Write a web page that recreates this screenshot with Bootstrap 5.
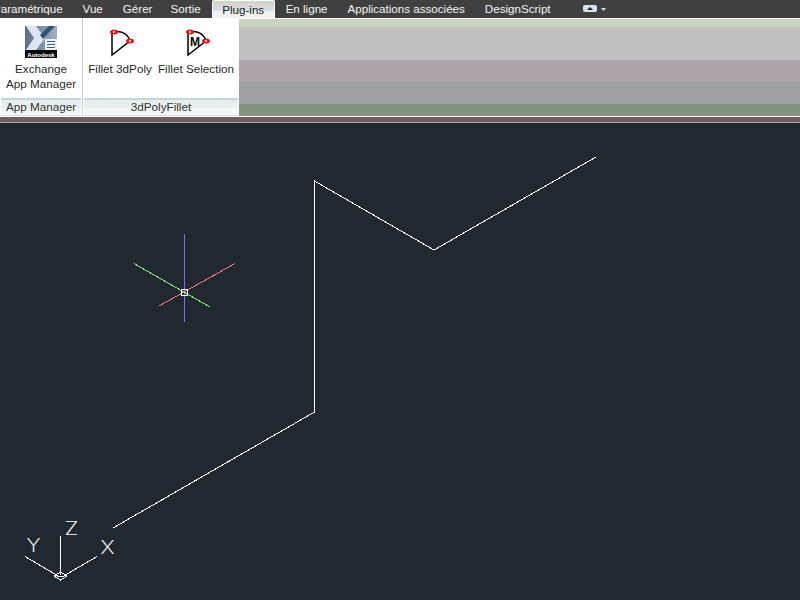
<!DOCTYPE html>
<html lang="fr">
<head>
<meta charset="utf-8">
<link href="https://cdn.jsdelivr.net/npm/bootstrap@5.3.0/dist/css/bootstrap.min.css" rel="stylesheet">
<style>
html,body{height:600px;overflow:hidden;background:#212830;}
body{font-family:"Liberation Sans",Arial,sans-serif;font-size:11.7px;line-height:16px;color:#2a2a2a;}
.tabbar{height:18px;background:#404040;color:#f4f4f4;overflow:hidden;white-space:nowrap;font-size:11.6px;}
.tabitem{padding:0 10px;height:18px;line-height:17px;flex:none;}
.tabitem.firsttab{margin-left:-17px;}
.tabitem.tighttab{padding-left:8px;}
.tabitem.active-tab{color:#222;border:1px solid #fff;border-bottom:0;border-radius:2px 2px 0 0;padding:0 9.5px;margin:0 1px;background:linear-gradient(#cfd8c4 0,#cfd8c4 3px,#dfd3d3 3px,#dfd3d3 6px,#cfe0e6 6px,#cfe0e6 10px,#f2f2f2 10px);}
.ribbon{height:98px;}
.panel-a{width:83px;background:#fff;border-right:1px solid #c8cfc8;}
.panel-b{width:156px;background:#fff;}
.panel-body{height:80px;}
.paneltitle{height:18px;margin:0 1px;border-top:2px solid #c3d4e3;border-bottom:1px solid #d5dfe6;background:linear-gradient(#e8eeee 0,#e8eeee 8px,#f5f6f6 8px);text-align:center;line-height:13px;color:#333;white-space:nowrap;}
.tool{text-align:center;line-height:15px;white-space:nowrap;}
.toolicon{margin-bottom:3px;}
.toolcell-a{width:74px;}
.toolcell-b{width:78px;}
.bands{flex:1;}
.band1{height:1px;background:#fff;}
.band2{height:8px;background:#c8d5bc;}
.band3{height:33px;background:#c0c0c0;}
.band4{height:22px;background:#aba4ab;}
.band5{height:22px;background:#9f9fa3;}
.band6{height:12px;background:#82937f;}
.rule1{height:1px;background:#fff;}
.rule2{height:5px;background:#755a60;}
.rule3{height:1px;background:#a8a8a8;}
.canvasarea{height:477px;position:relative;background:#212830;}
.canvasarea svg{display:block;}
.axis{font-family:"Inter","Lato",sans-serif;font-weight:200;font-size:18px;fill:#fff;stroke:#fff;stroke-width:.15;}
.autotext{font-family:"Liberation Sans",sans-serif;font-size:6px;font-weight:700;fill:#fff;}
.mletter{font-family:"Liberation Sans",sans-serif;font-size:12px;font-weight:700;fill:#000;}
</style>
</head>
<body>
<nav class="tabbar d-flex">
  <span class="tabitem firsttab">Paramétrique</span>
  <span class="tabitem">Vue</span>
  <span class="tabitem">Gérer</span>
  <span class="tabitem tighttab">Sortie</span>
  <span class="tabitem active-tab">Plug-ins</span>
  <span class="tabitem">En ligne</span>
  <span class="tabitem">Applications associées</span>
  <span class="tabitem">DesignScript</span>
  <svg class="ms-3" width="36" height="18" viewBox="0 0 36 18">
    <rect x="6" y="5" width="14" height="7" rx="2" fill="#d8e2ee"/>
    <path d="M10 10h6l-3-3z" fill="#222"/>
    <path d="M24 8h5l-2.500 3z" fill="#ddd"/>
  </svg>
</nav>
<div class="ribbon d-flex">
  <section class="panel-a d-flex flex-column">
    <div class="panel-body tool d-flex flex-column align-items-center">
      <svg class="mt-2 toolicon" width="32" height="32" viewBox="0 0 32 32">
        <defs><linearGradient id="bg" x1="0" y1="0" x2="1" y2="0"><stop offset="0" stop-color="#5a6f88"/><stop offset="1" stop-color="#9fb0c4"/></linearGradient></defs>
        <rect width="32" height="32" fill="url(#bg)"/>
        <path d="M1 0h10l9 12-9 12H1l8-12z" fill="#dbe6f2"/>
        <path d="M24 0h6L18 13l-3-4z" fill="#2f5378"/>
        <rect x="20" y="13" width="12" height="11" fill="#eef2f6"/>
        <path d="M22 15.500h8M22 18.500h8M22 21.500h8" stroke="#36618f"/>
        <rect y="24" width="32" height="8" fill="#0a0a0a"/>
        <text class="autotext" x="16" y="30.500" text-anchor="middle">Autodesk</text>
      </svg>
      <span>Exchange<br>App Manager</span>
    </div>
    <div class="paneltitle">App Manager</div>
  </section>
  <section class="panel-b d-flex flex-column">
    <div class="panel-body d-flex tool">
      <div class="toolcell-a d-flex flex-column align-items-center">
        <svg class="mt-2 toolicon" width="32" height="32" viewBox="0 0 32 32">
          <path d="M10 6A13 13 0 0 1 26 15L8 29V6z" fill="#fff" stroke="#000" stroke-width="1.500"/>
          <ellipse cx="10" cy="6" rx="4" ry="2.500" fill="#e8141c"/><circle cx="10" cy="6" r="1" fill="#fff"/>
          <ellipse cx="26" cy="15" rx="4" ry="2.500" fill="#e8141c"/><circle cx="26" cy="15" r="1" fill="#fff"/>
        </svg>
        <span>Fillet 3dPoly</span>
      </div>
      <div class="toolcell-b d-flex flex-column align-items-center">
        <svg class="mt-2 toolicon" width="32" height="32" viewBox="0 0 32 32">
          <path d="M10 6A13 13 0 0 1 26 15L8 29V6z" fill="#fff" stroke="#000" stroke-width="1.500"/>
          <text class="mletter" x="10" y="19.500">M</text>
          <ellipse cx="10" cy="6" rx="4" ry="2.500" fill="#e8141c"/><circle cx="10" cy="6" r="1" fill="#fff"/>
          <ellipse cx="26" cy="15" rx="4" ry="2.500" fill="#e8141c"/><circle cx="26" cy="15" r="1" fill="#fff"/>
        </svg>
        <span>Fillet Selection</span>
      </div>
    </div>
    <div class="paneltitle">3dPolyFillet</div>
  </section>
  <div class="bands d-flex flex-column">
    <div class="band1"></div><div class="band2"></div><div class="band3"></div><div class="band4"></div><div class="band5"></div><div class="band6"></div>
  </div>
</div>
<div class="rule1"></div><div class="rule2"></div><div class="rule3"></div>
<main class="canvasarea">
  <svg width="800" height="477" viewBox="0 123 800 477" fill="none" shape-rendering="crispEdges">
    <polyline points="113,528 314.500,412 314.500,181 434,250 596,157" stroke="#fff" stroke-width="1"/>
    <path d="M184.500 234V322" stroke="#7072e6"/>
    <path d="M134 263.500L210 307" stroke="#7ef07e"/>
    <path d="M235 263.500L159 306" stroke="#f27a7a"/>
    <rect x="181.500" y="289.500" width="6" height="6" stroke="#fff"/>
    <g stroke="#fff">
      <path d="M60.500 536V575M25 556.500L60 577M97 556.500L62 577"/>
      <path d="M54 576L60.500 572L67 576L60.500 580Z M57 576H64"/>
    </g>
    <text class="axis" x="64.500" y="535" textLength="14" lengthAdjust="spacingAndGlyphs">Z</text>
    <text class="axis" x="26.500" y="552" textLength="14" lengthAdjust="spacingAndGlyphs">Y</text>
    <text class="axis" x="100.500" y="554" textLength="14" lengthAdjust="spacingAndGlyphs">X</text>
  </svg>
</main>
</body>
</html>
